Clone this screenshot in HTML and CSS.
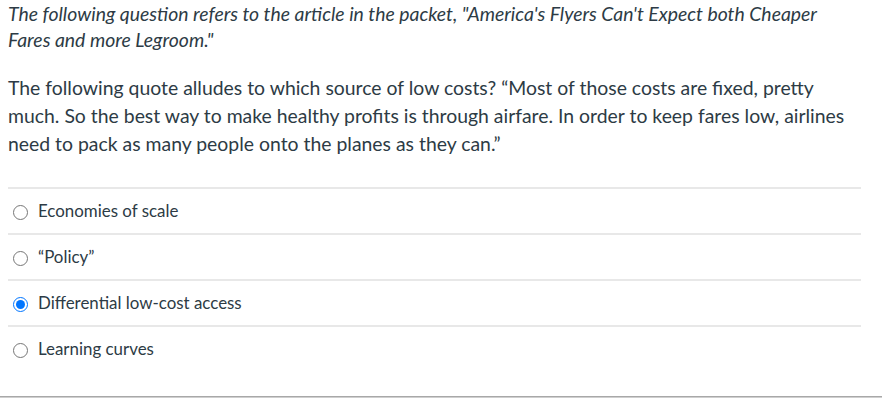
FILE: index.html
```html
<!DOCTYPE html>
<html lang="en">
<head>
<meta charset="utf-8">
<title>Quiz question</title>
<link rel="stylesheet" href="styles.css">
</head>
<body>
<div class="question">
  <p class="intro"><em>The following question refers to the article in the packet, "America's Flyers Can't Expect both Cheaper Fares and more Legroom."</em></p>
  <p class="prompt">The following quote alludes to which source of low costs? “Most of those costs are fixed, pretty much. So the best way to make healthy profits is through airfare. In order to keep fares low, airlines need to pack as many people onto the planes as they can.”</p>
  <div class="answers">
    <label class="answer"><input type="radio" name="ans"><span class="answer-text">Economies of scale</span></label>
    <label class="answer"><input type="radio" name="ans"><span class="answer-text">“Policy”</span></label>
    <label class="answer"><input type="radio" name="ans" checked><span class="answer-text">Differential low-cost access</span></label>
    <label class="answer"><input type="radio" name="ans"><span class="answer-text">Learning curves</span></label>
  </div>
</div>
<div class="footer-rule"></div>
</body>
</html>
```

FILE: styles.css
```css
html, body {
  margin: 0;
  padding: 0;
  background: #ffffff;
}

body {
  font-family: Lato, "Open Sans", sans-serif;
  color: #2d3b45;
}

.question {
  padding: 1px 21px 0 8px;
}

.intro {
  margin: 0;
  font-size: 19.4px;
  line-height: 26px;
}

.prompt {
  margin: 21px 0 0 0;
  font-size: 19.4px;
  line-height: 28px;
}

.answers {
  margin-top: 29px;
  display: flex;
  flex-direction: column;
}

.answer {
  display: flex;
  align-items: center;
  height: 44px;
  border-top: 2px solid #e8e8e8;
  font-size: 16.9px;
}

.answer input {
  margin: 2px 10px 0 5px;
  width: 15px;
  height: 15px;
}

.answer-text {
  line-height: 20px;
}

.footer-rule {
  margin-top: 25px;
  height: 1px;
  background: #a8a8a8;
  border-bottom: 1px solid #cfcfcf;
}
```
